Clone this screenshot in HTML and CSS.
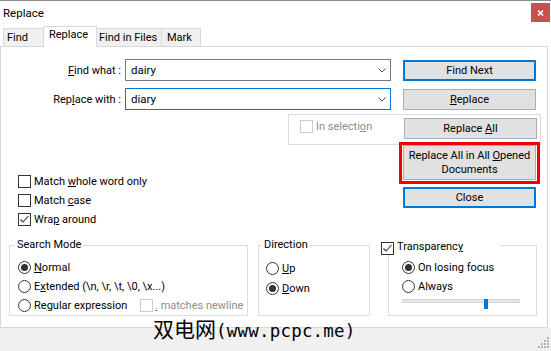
FILE: index.html
```html
<!DOCTYPE html>
<html>
<head>
    <title>Replace</title>
    <link rel="stylesheet" href="styles.css">
</head>
<body>
    <div class="window">
        <div class="titlebar">
            <span class="title">Replace</span>
            <span class="close-btn">
                <svg width="7" height="6" viewBox="0 0 7 6"><path d="M1 0.5 L6 5.5 M6 0.5 L1 5.5" stroke="#fff" stroke-width="1.6" fill="none"/></svg>
            </span>
        </div>

        <div class="tabs">
            <div class="tab tab-find">Find</div>
            <div class="tab tab-replace active">Replace</div>
            <div class="tab tab-files">Find in Files</div>
            <div class="tab tab-mark">Mark</div>
        </div>

        <div class="panel">
            <div class="field-row">
                <span class="field-label"><u>F</u>ind what :</span>
                <div class="combo">
                    <span>dairy</span>
                    <svg class="chevron" width="8" height="5" viewBox="0 0 8 5"><path d="M0.5 0.5 L4 4 L7.5 0.5" stroke="#555" fill="none"/></svg>
                </div>
                <button class="btn btn-default">Find Next</button>
            </div>

            <div class="field-row second">
                <span class="field-label">Rep<u>l</u>ace with :</span>
                <div class="combo focused">
                    <span>diary</span>
                    <svg class="chevron" width="8" height="5" viewBox="0 0 8 5"><path d="M0.5 0.5 L4 4 L7.5 0.5" stroke="#555" fill="none"/></svg>
                </div>
                <button class="btn"><u>R</u>eplace</button>
            </div>

            <div class="selection-box">
                <label class="check disabled"><span class="box"></span><span>In selecti<u>o</u>n</span></label>
                <button class="btn">Replace <u>A</u>ll</button>
            </div>

            <div class="middle">
                <div class="options">
                    <label class="check"><span class="box"></span><span>Match <u>w</u>hole word only</span></label>
                    <label class="check"><span class="box"></span><span>Match <u>c</u>ase</span></label>
                    <label class="check"><span class="box"><svg width="11" height="11" viewBox="0 0 11 11"><path d="M1.5 5.5 L4 8 L9.5 2" stroke="#333" stroke-width="1.1" fill="none"/></svg></span><span>Wra<u>p</u> around</span></label>
                </div>
                <div class="actions">
                    <div class="highlight">
                        <button class="btn btn-tall">Replace All in All <u>O</u>pened<br>Documents</button>
                    </div>
                    <button class="btn btn-default btn-close">Close</button>
                </div>
            </div>

            <div class="groups">
                <fieldset class="group group-mode">
                    <legend>Search Mode</legend>
                    <label class="radio"><span class="dot on"></span><span><u>N</u>ormal</span></label>
                    <label class="radio"><span class="dot"></span><span>E<u>x</u>tended (\n, \r, \t, \0, \x...)</span></label>
                    <div class="regex-row">
                        <label class="radio regex-label"><span class="dot"></span><span>Re<u>g</u>ular expression</span></label>
                        <label class="check disabled"><span class="box"></span><span><u>.</u> matches newline</span></label>
                    </div>
                </fieldset>

                <fieldset class="group group-direction">
                    <legend>Direction</legend>
                    <label class="radio"><span class="dot"></span><span><u>U</u>p</span></label>
                    <label class="radio"><span class="dot on"></span><span><u>D</u>own</span></label>
                </fieldset>

                <fieldset class="group group-transparency">
                    <legend>
                        <span class="box"><svg width="11" height="11" viewBox="0 0 11 11"><path d="M1.5 5.5 L4 8 L9.5 2" stroke="#333" stroke-width="1.1" fill="none"/></svg></span>
                        <span class="legend-text">Transparenc<u>y</u></span>
                    </legend>
                    <label class="radio"><span class="dot on"></span><span>On losing focus</span></label>
                    <label class="radio"><span class="dot"></span><span>Always</span></label>
                    <div class="slider">
                        <div class="track"></div>
                        <div class="thumb"></div>
                    </div>
                </fieldset>
            </div>
        </div>

        <div class="statusbar">
            <svg width="12" height="12" viewBox="0 0 12 12" fill="#b4b4b4">
                <rect x="9" y="0" width="2" height="2"/>
                <rect x="6" y="3" width="2" height="2"/>
                <rect x="9" y="3" width="2" height="2"/>
                <rect x="3" y="6" width="2" height="2"/>
                <rect x="6" y="6" width="2" height="2"/>
                <rect x="9" y="6" width="2" height="2"/>
                <rect x="0" y="9" width="2" height="2"/>
                <rect x="3" y="9" width="2" height="2"/>
                <rect x="6" y="9" width="2" height="2"/>
                <rect x="9" y="9" width="2" height="2"/>
            </svg>
        </div>

        <div class="watermark">双电网<span class="watermark-url">(www.pcpc.me)</span></div>
    </div>
</body>
</html>
```

FILE: styles.css
```css
body {
    margin: 0;
    font-family: Roboto, "Noto Sans", sans-serif;
    font-size: 11px;
    color: #000;
}

.window {
    position: relative;
    width: 551px;
    height: 351px;
    box-sizing: border-box;
    border-top: 1px solid #8c8c8c;
    background: #fff;
    display: flex;
    flex-direction: column;
    overflow: hidden;
}

u {
    text-underline-offset: 1px;
}

/* title bar */

.titlebar {
    height: 25px;
    display: flex;
    align-items: flex-start;
    flex: none;
}

.title {
    padding-left: 3px;
    line-height: 24px;
    font-size: 11.5px;
}

.close-btn {
    margin-left: auto;
    margin-right: 1px;
    margin-top: 2px;
    width: 19px;
    height: 19px;
    background: #c75050;
    display: flex;
    align-items: center;
    justify-content: center;
}

/* tabs */

.tabs {
    height: 20px;
    flex: none;
    display: flex;
    align-items: flex-end;
    padding-left: 3px;
}

.tab {
    height: 18px;
    box-sizing: border-box;
    border: 1px solid #d9d9d9;
    border-bottom: none;
    background: #f0f0f0;
    line-height: 17px;
    margin-left: -1px;
}

.tab-find {
    margin-left: 0;
    width: 41px;
    padding-left: 3px;
}

.tab-replace {
    width: 54px;
    padding-left: 5px;
}

.tab-files {
    width: 66px;
    padding-left: 2px;
}

.tab-mark {
    width: 40px;
    padding-left: 5px;
}

.tab.active {
    position: relative;
    z-index: 1;
    height: 21px;
    margin-bottom: -1px;
    background: #fff;
    line-height: 16px;
}

/* panel */

.panel {
    width: 548px;
    height: 282px;
    flex: none;
    box-sizing: border-box;
    border: 1px solid #d9d9d9;
    padding-top: 12px;
}

.field-row {
    display: flex;
    align-items: center;
    height: 22px;
}

.field-row.second {
    margin-top: 7px;
}

.field-label {
    width: 120px;
    text-align: right;
    margin-right: 4px;
}

.combo {
    width: 266px;
    height: 22px;
    box-sizing: border-box;
    border: 1px solid #7a7a7a;
    padding-left: 5px;
    display: flex;
    align-items: center;
    font-size: 11.5px;
}

.combo.focused {
    border-color: #0078d7;
}

.chevron {
    margin-left: auto;
    margin-right: 4px;
}

.btn {
    width: 133px;
    height: 21px;
    box-sizing: border-box;
    border: 1px solid #adadad;
    background: #e1e1e1;
    font-family: inherit;
    font-size: 11px;
    color: #000;
    padding: 0;
    cursor: pointer;
}

.field-row .btn {
    margin-left: 12px;
}

.btn-default {
    border: 2px solid #0078d7;
}

.btn-tall {
    height: 35px;
    line-height: 14px;
}

/* in selection */

.selection-box {
    margin-top: 4px;
    margin-left: 287px;
    width: 253px;
    height: 31px;
    box-sizing: border-box;
    border: 1px solid #dcdcdc;
    display: flex;
    align-items: flex-start;
    padding-left: 11px;
}

.selection-box .check {
    margin-top: 2px;
}

.selection-box .btn {
    margin-left: auto;
    margin-right: 3px;
    margin-top: 3px;
}

/* checkboxes and radios */

.check,
.radio {
    display: flex;
    align-items: center;
    height: 19px;
    white-space: nowrap;
}

.box {
    width: 13px;
    height: 13px;
    box-sizing: border-box;
    border: 1px solid #333;
    background: #fff;
    display: inline-flex;
    align-items: center;
    justify-content: center;
    flex: none;
}

.check .box,
.radio .dot {
    margin-right: 3px;
}

.check.disabled {
    color: #8d8d8d;
}

.check.disabled .box {
    border-color: #cccccc;
}

.dot {
    width: 13px;
    height: 13px;
    box-sizing: border-box;
    border: 1px solid #333;
    border-radius: 50%;
    background: #fff;
    display: inline-flex;
    align-items: center;
    justify-content: center;
    flex: none;
}

.dot.on::after {
    content: "";
    width: 7px;
    height: 7px;
    border-radius: 50%;
    background: #333;
}

/* middle area */

.middle {
    display: flex;
    align-items: flex-start;
    margin-top: -3px;
}

.options {
    margin-left: 17px;
    margin-top: 30px;
}

.actions {
    margin-left: auto;
    margin-right: 7px;
    width: 141px;
}

.highlight {
    border: 3px solid #f00000;
    padding: 0 1px 1px 1px;
}

.btn-close {
    margin-top: 3px;
    margin-left: 4px;
}

/* group boxes */

.groups {
    display: flex;
    margin-top: 9px;
}

.group {
    margin: 0;
    padding: 6px 0 0 0;
    height: 78px;
    box-sizing: border-box;
    border: 1px solid #dcdcdc;
    min-width: 0;
}

.group legend {
    padding: 0 2px;
    line-height: 14px;
}

.group-mode {
    margin-left: 8px;
    width: 239px;
    padding-left: 8px;
}

.group-mode legend {
    margin-left: -3px;
}

.regex-row {
    display: flex;
    align-items: center;
}

.regex-label {
    width: 122px;
}

.regex-row .check .box {
    margin-right: 2px;
}

.group-direction {
    margin-left: 10px;
    width: 112px;
    padding-left: 7px;
}

.group-direction legend {
    margin-left: -4px;
}

.group-direction .radio {
    height: 20px;
}

.group-transparency {
    margin-left: 18px;
    width: 149px;
    padding-left: 13px;
}

.group-transparency legend {
    margin-left: -21px;
    width: 119px;
    height: 14px;
    box-sizing: border-box;
    padding: 0;
    background: #fff;
    display: flex;
    align-items: flex-start;
    gap: 3px;
}

.group-transparency legend .box {
    margin-top: 4px;
}

.legend-text {
    margin-top: 2px;
}

.slider {
    position: relative;
    width: 118px;
    height: 10px;
    margin-top: 2px;
}

.track {
    margin-top: 3px;
    height: 4px;
    box-sizing: border-box;
    border: 1px solid #d6d6d6;
    background: #e7e7e7;
}

.thumb {
    position: absolute;
    left: 82px;
    top: 0;
    width: 4px;
    height: 10px;
    background: #0078d7;
}

/* status bar */

.statusbar {
    flex: 1;
    background: #f0f0f0;
    display: flex;
    justify-content: flex-end;
    align-items: flex-end;
    padding: 0 1px 2px 0;
}

/* watermark over the bottom */

.watermark {
    position: absolute;
    left: 153px;
    top: 315px;
    font-family: "Noto Sans CJK SC", sans-serif;
    font-size: 21px;
    line-height: 24px;
    color: #000;
    white-space: nowrap;
}

.watermark-url {
    font-family: "DejaVu Sans Mono", monospace;
    font-size: 17.5px;
    letter-spacing: 0.2px;
}
```
